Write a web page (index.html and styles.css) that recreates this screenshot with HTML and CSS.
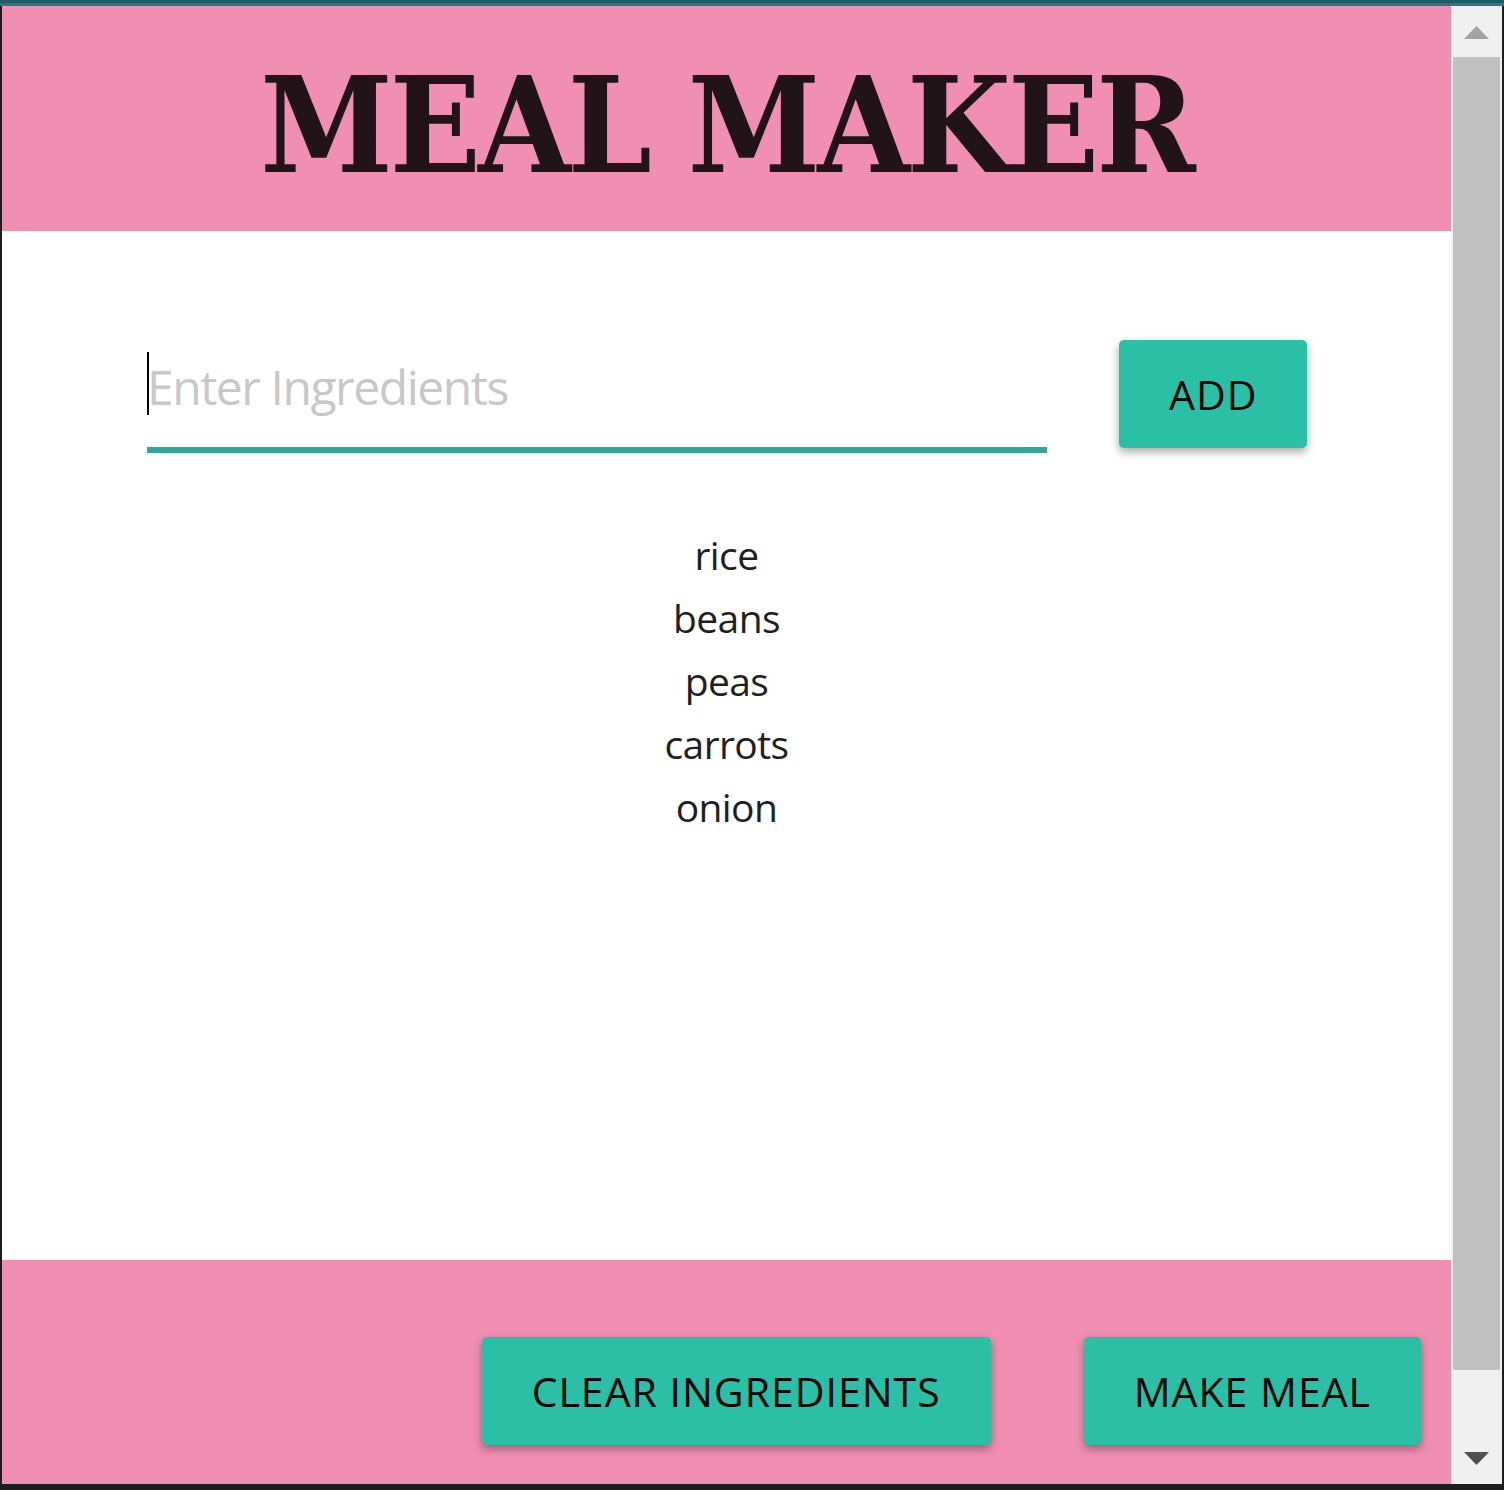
FILE: index.html
```html
<!DOCTYPE html>
<html lang="en">
<head>
<meta charset="utf-8">
<title>Meal Maker</title>
<link rel="stylesheet" href="styles.css">
</head>
<body>
<div class="window">
  <div class="titlebar"><div class="titlebar-dark"></div><div class="titlebar-light"></div></div>
  <div class="frame">
    <div class="viewport">
      <header class="header"><h1 class="title">MEAL MAKER</h1></header>
      <main class="main">
        <div class="entry">
          <div class="field">
            <span class="caret"></span>
            <input class="input" type="text" placeholder="Enter Ingredients">
          </div>
          <button class="btn">ADD</button>
        </div>
        <ul class="list">
          <li>rice</li>
          <li>beans</li>
          <li>peas</li>
          <li>carrots</li>
          <li>onion</li>
        </ul>
      </main>
      <footer class="footer">
        <button class="btn">CLEAR INGREDIENTS</button>
        <button class="btn">MAKE MEAL</button>
      </footer>
    </div>
    <div class="scrollbar">
      <div class="sb-btn"><svg width="25" height="13" viewBox="0 0 25 13"><polygon points="12.5,0 25,13 0,13" fill="#a3a3a3"/></svg></div>
      <div class="sb-track"><div class="sb-thumb"></div></div>
      <div class="sb-btn sb-down"><svg width="25" height="13" viewBox="0 0 25 13"><polygon points="0,0 25,0 12.5,13" fill="#505050"/></svg></div>
    </div>
  </div>
</div>
</body>
</html>
```
FILE: styles.css
```css
html, body {
  margin: 0;
  padding: 0;
  background: #1e1e1e;
}
.window {
  width: 1504px;
  height: 1490px;
  display: flex;
  flex-direction: column;
  overflow: hidden;
}
.titlebar {
  flex: none;
  height: 6px;
  display: flex;
  flex-direction: column;
}
.titlebar-dark { height: 3px; background: #1b5d65; }
.titlebar-light { height: 3px; background: #2c767d; }
.frame {
  flex: 1;
  display: flex;
  min-height: 0;
  border-left: 2px solid #1e1e1e;
  border-right: 2px solid #1e1e1e;
  border-bottom: 6px solid #1e1e1e;
}
.viewport {
  flex: 1;
  display: flex;
  flex-direction: column;
  overflow: hidden;
  background: #ffffff;
  min-width: 0;
}
.header {
  flex: none;
  height: 225px;
  box-sizing: border-box;
  padding: 13px 0 0 0;
  background: #f08fb1;
  display: flex;
  align-items: center;
  justify-content: center;
}
.title {
  margin: 0;
  font-family: "DejaVu Serif Condensed", "DejaVu Serif", serif;
  font-stretch: condensed;
  font-weight: bold;
  font-size: 133px;
  letter-spacing: -3px;
  line-height: 1;
  color: #201418;
}
.main {
  flex: none;
  height: 1029px;
  background: #ffffff;
}
.entry {
  display: flex;
  align-items: flex-start;
  gap: 72px;
  padding: 109px 0 0 145px;
}
.field {
  position: relative;
  width: 900px;
  height: 113px;
}
.caret {
  position: absolute;
  left: 0;
  top: 12px;
  width: 2px;
  height: 63px;
  background: #000;
}
.input {
  display: block;
  width: 100%;
  height: 113px;
  box-sizing: border-box;
  margin: 0;
  border: none;
  border-bottom: 6px solid #36a595;
  padding: 0 0 14px 0;
  background: transparent;
  outline: none;
  font-family: "Open Sans", sans-serif;
  font-size: 48px;
  letter-spacing: -1.45px;
  color: #222;
}
.input::placeholder {
  color: #c8c8c8;
  opacity: 1;
}
.btn {
  flex: none;
  height: 108px;
  padding: 0 50px;
  margin: 0;
  border: none;
  border-radius: 5px;
  background: #2bbfa5;
  color: #050505;
  font-family: "Open Sans", sans-serif;
  font-size: 41px;
  letter-spacing: 1px;
  box-shadow: 0 4px 10px rgba(0, 0, 0, 0.35);
}
.list {
  list-style: none;
  margin: 70px 0 0;
  padding: 0;
  text-align: center;
  font-family: "Open Sans", sans-serif;
  font-size: 39px;
  letter-spacing: -0.6px;
  line-height: 63px;
  color: #1f1f1f;
}
.footer {
  flex: 1;
  background: #f08fb1;
  display: flex;
  justify-content: flex-end;
  align-items: flex-start;
  gap: 93px;
  padding: 77px 30px 0 0;
}
.scrollbar {
  flex: none;
  width: 51px;
  background: #f0f0f0;
  display: flex;
  flex-direction: column;
}
.sb-btn {
  flex: none;
  height: 51px;
  display: flex;
  justify-content: center;
  align-items: flex-start;
  padding-top: 20px;
  box-sizing: border-box;
}
.sb-down {
  padding-top: 19px;
}
.sb-track {
  flex: 1;
}
.sb-thumb {
  height: 1313px;
  margin: 0 2px;
  background: #c0c0c0;
}
```
